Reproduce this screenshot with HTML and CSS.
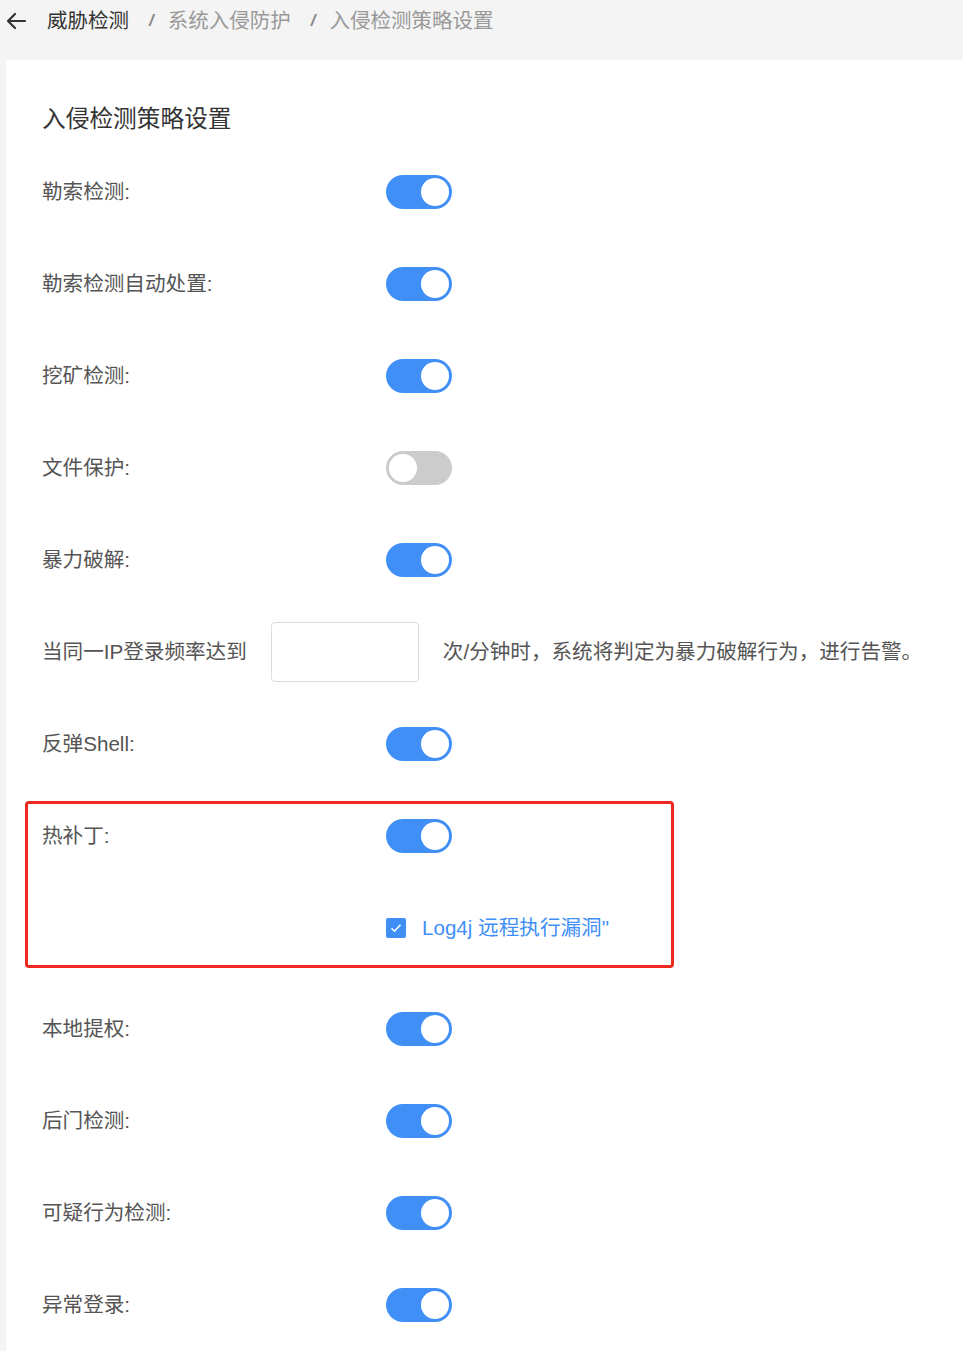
FILE: index.html
```html
<!DOCTYPE html>
<html lang="zh-CN">
<head>
<meta charset="utf-8">
<title>入侵检测策略设置</title>
<link rel="stylesheet" href="styles.css">
</head>
<body>
<div class="page">
  <nav class="crumbs">
    <svg class="back" width="22" height="20" viewBox="0 0 22 20"><path d="M20 10H3M10 3L3 10l7 7" fill="none" stroke="#333" stroke-width="2.2" stroke-linecap="round" stroke-linejoin="round"/></svg>
    <span class="crumb-cur">威胁检测</span>
    <span class="sep">/</span>
    <span class="crumb">系统入侵防护</span>
    <span class="sep">/</span>
    <span class="crumb">入侵检测策略设置</span>
  </nav>
  <main class="card">
    <h1 class="title">入侵检测策略设置</h1>
    <div class="row"><span class="label">勒索检测:</span><span class="switch on"></span></div>
    <div class="row"><span class="label">勒索检测自动处置:</span><span class="switch on"></span></div>
    <div class="row"><span class="label">挖矿检测:</span><span class="switch on"></span></div>
    <div class="row"><span class="label">文件保护:</span><span class="switch"></span></div>
    <div class="row"><span class="label">暴力破解:</span><span class="switch on"></span></div>
    <div class="row freq"><span class="text">当同一IP登录频率达到</span><span class="input"></span><span class="text">次/分钟时，系统将判定为暴力破解行为，进行告警。</span></div>
    <div class="row"><span class="label">反弹Shell:</span><span class="switch on"></span></div>
    <section class="hotpatch">
      <div class="row"><span class="label">热补丁:</span><span class="switch on"></span></div>
      <div class="row"><span class="label"></span><span class="check"><svg width="12" height="10" viewBox="0 0 12 10"><path d="M1.5 5.2l3 3 6-6.5" fill="none" stroke="#fff" stroke-width="1.6"/></svg></span><span class="check-text">Log4j 远程执行漏洞"</span></div>
      <div class="highlight"></div>
    </section>
    <div class="row"><span class="label">本地提权:</span><span class="switch on"></span></div>
    <div class="row"><span class="label">后门检测:</span><span class="switch on"></span></div>
    <div class="row"><span class="label">可疑行为检测:</span><span class="switch on"></span></div>
    <div class="row"><span class="label">异常登录:</span><span class="switch on"></span></div>
  </main>
</div>
</body>
</html>
```
FILE: styles.css
```css
html, body { margin: 0; padding: 0; }
body {
  background: #f4f4f4;
  font-family: "Liberation Sans", "Noto Sans CJK SC", sans-serif;
  color: #555;
  overflow: hidden;
}
.page { width: 963px; }
.crumbs {
  height: 60px;
  box-sizing: border-box;
  padding: 0 0 19px 5px;
  display: flex;
  align-items: center;
  font-size: 20.5px;
  line-height: 24px;
}
.back { margin-right: 20px; }
.crumb-cur { color: #333; }
.crumb { color: #999; }
.sep { color: #888; margin: 0 14px 0 20px; font-weight: bold; font-style: italic; font-size: 17px; }
.card {
  margin-left: 6px;
  background: #fff;
  padding: 40px 0 0 36px;
  min-height: 1300px;
}
.title {
  margin: 0 0 8px;
  font-size: 23.7px;
  line-height: 38px;
  font-weight: normal;
  color: #333;
}
.row {
  height: 92px;
  display: flex;
  align-items: center;
  font-size: 20.6px;
  line-height: 28px;
}
.label { width: 344px; flex: none; color: #555; }
.switch {
  width: 66px;
  height: 34px;
  border-radius: 17px;
  background: #ccc;
  position: relative;
  flex: none;
}
.switch::after {
  content: "";
  position: absolute;
  top: 3px;
  left: 3px;
  width: 28px;
  height: 28px;
  border-radius: 50%;
  background: #fff;
}
.switch.on { background: #3f8ff6; }
.switch.on::after { left: auto; right: 3px; }
.freq .text { color: #555; }
.input {
  width: 146px;
  height: 58px;
  border: 1px solid #ddd;
  border-radius: 4px;
  margin: 0 24px;
  flex: none;
}
.hotpatch {
  position: relative;
  height: 193px;
}
.check {
  width: 20px;
  height: 20px;
  border-radius: 2px;
  background: #3f8ff6;
  display: flex;
  align-items: center;
  justify-content: center;
  flex: none;
}
.check-text { color: #3f8ff6; margin-left: 16px; }
.highlight {
  position: absolute;
  left: -17px;
  top: 11px;
  width: 643px;
  height: 161px;
  border: 3px solid #ee2a20;
  border-radius: 4px;
  pointer-events: none;
}
```
